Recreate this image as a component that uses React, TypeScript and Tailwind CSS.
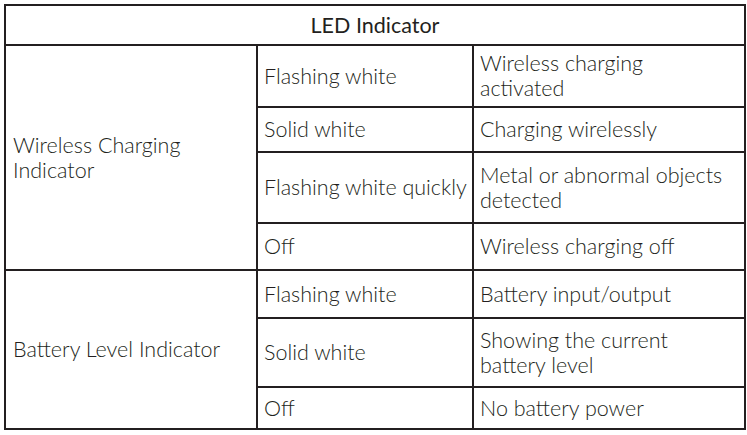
const rows = [
  {
    group: "Wireless Charging Indicator",
    groupLines: ["Wireless Charging", "Indicator"],
    items: [
      { state: "Flashing white", meaning: ["Wireless charging", "activated"], h: "h-[62px]" },
      { state: "Solid white", meaning: ["Charging wirelessly"], h: "h-[45px]" },
      { state: "Flashing white quickly", meaning: ["Metal or abnormal objects", "detected"], h: "h-[71px]" },
      { state: "Off", meaning: ["Wireless charging off"], h: "h-[47px]" },
    ],
  },
  {
    group: "Battery Level Indicator",
    groupLines: ["Battery Level Indicator"],
    items: [
      { state: "Flashing white", meaning: ["Battery input/output"], h: "h-[48px]" },
      { state: "Solid white", meaning: ["Showing the current", "battery level"], h: "h-[69px]" },
      { state: "Off", meaning: ["No battery power"], h: "h-[42px]" },
    ],
  },
];

const cell = "border-2 border-[#231f20] px-[6px] align-middle leading-[25px]";

export default function App() {
  return (
    <div className="w-[747px] h-[435px] bg-white pt-[4px] pl-[4px] font-['Lato','Liberation_Sans',sans-serif] text-[21.5px] font-light text-[#231f20]">
      <table className="table-fixed border-collapse w-[740px]">
        <colgroup>
          <col className="w-[252px]" />
          <col className="w-[216px]" />
          <col className="w-[272px]" />
        </colgroup>
        <thead>
          <tr className="h-[40px]">
            <th colSpan={3} className={`${cell} text-center font-normal`}>
              LED Indicator
            </th>
          </tr>
        </thead>
        <tbody>
          {rows.map((g) =>
            g.items.map((it, i) => (
              <tr key={g.group + i} className={it.h}>
                {i === 0 && (
                  <td rowSpan={g.items.length} className={`${cell} pl-[7px]`}>
                    {g.groupLines.map((l) => (
                      <div key={l}>{l}</div>
                    ))}
                  </td>
                )}
                <td className={`${cell} whitespace-nowrap`}>{it.state}</td>
                <td className={cell}>
                  {it.meaning.map((l) => (
                    <div key={l}>{l}</div>
                  ))}
                </td>
              </tr>
            ))
          )}
        </tbody>
      </table>
    </div>
  );
}
